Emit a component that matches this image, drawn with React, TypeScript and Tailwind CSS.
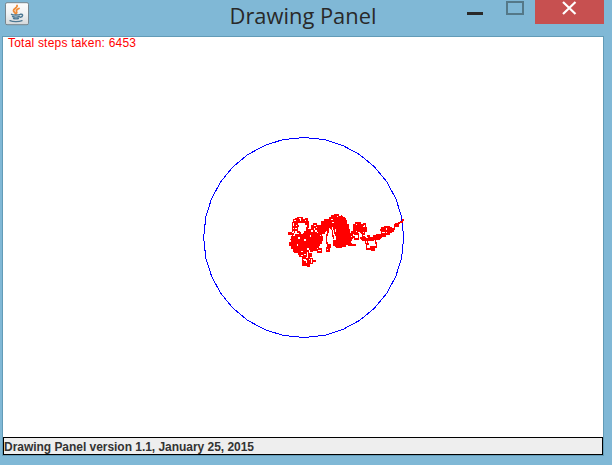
// One quadrant of the boundary, flattened into eight chords.
const QUARTER = [
  [0, 1], [0.207, 0.979], [0.389, 0.921], [0.559, 0.829],
  [0.707, 0.707], [0.829, 0.559], [0.921, 0.389], [0.979, 0.207],
];
const RING = [0, 1, 2, 3]
  .flatMap((q) =>
    QUARTER.map(([x, y]) => {
      const [px, py] = [[x, -y], [y, x], [-x, y], [-y, -x]][q];
      return `${(300.7 + 100 * px).toFixed(1)},${(200.5 + 100 * py).toFixed(1)}`;
    }),
  )
  .join(" ");

function JavaIcon() {
  return (
    <svg className="block h-6 w-6" viewBox="0 0 24 24">
      <defs>
        <linearGradient id="key" x1="0" y1="0" x2="0" y2="1">
          <stop offset="0" stopColor="#fdfdfd" />
          <stop offset="0.5" stopColor="#f0f2f3" />
          <stop offset="1" stopColor="#d3d7da" />
        </linearGradient>
      </defs>
      <rect x="0.5" y="0.7" width="23" height="22" rx="1.5" fill="url(#key)" stroke="#77858d" />
      <g fill="none" strokeLinecap="round">
        <path d="M12 3.500c1 2-3.500 3-3.500 5 0 1.500 1.700 2 2 3.300M14 6.500c-2 .8-3 1.500-2.500 2.800.4.900.7 1.200-.2 2.200" stroke="#ef8a35" strokeWidth="1.800" />
        <path d="M6.500 12.300c1.500 1 7.500.8 8.800 0M7.500 14.500c2 .8 5 .7 6.800 0M8.500 16.500c1.500.5 3.500.5 5 0M15.500 12.300c3-.7 2.700 2.500-.2 3M5 18.700c3 1.300 9 1.200 12 0" stroke="#4d7893" strokeWidth="1.400" />
      </g>
    </svg>
  );
}

function Walk() {
  return (
    <g fill="none" stroke="#ff0000" strokeWidth="4.4" strokeLinejoin="miter">
      {/* left cluster, three units to a pixel */}
      <g transform="translate(277.5 168) scale(.33333)">
        <path fill="#ff0000" strokeWidth="3" d="M38 94h6v-6h14v6h12v-9h8v-6h12v9h6v-6h12v9h9v6h6v18h-6v9h-9v9h-9v6h-9v-6h-9v9h-12v-6h-15v6h-12v-12h-9v-9h-6v-9h6v-9h-3z" />
        <path d="M36 66v-14h3v-9h6v-3h8v-3h12v6h12v-3h3v9h3v18h-3v6h3v9h6v9M40 51h9v-6h6v6h9v-6h6v6h6v9M45 54v12h9M51 69v12h9v9h12v-9h6v-9M36 66h6v-9h9v6h6M36 66v15M42 70v15M57 84v15M39 75h12M42 87h-9v-5h-9v5h12v9M33 96h12v9h-6v12h9M42 111v15h-3v9h9v-6h9v12M39 135v5h12v-5M84 75h6v9h9v-12h-6v-6h12v6h12M93 72v-9h6v-6h9v6h9v6M102 75v12h12v-6h9v6h3M96 93h15v-6h12v15M120 96h6v9h-9v9h9M105 126h9v6h9v9h-12v-6h-9v-6" />
        <path d="M60 135v15h-3v5h9v12h3v9M60 144h9v9h9v-9h-6v-9h12v12h9v6h-9v9h-6M87 150v9h-3v15M69 153v6h6v-3h-6M66 171h9v6h-9v5h12v-9M81 167h9v-6h6v6h9v3h-9v6h-9v9h-6v-15h9M84 180h6" />
        <path fill="#ff0000" strokeWidth="3" d="M66 172h10v9h-10zM82 167h9v8h-3v10h-6zM54 144h12v6h-12z" />
        <path stroke="#ffffff" d="M60 72h15M60 75h18M60 78h12M54 99h6M72 105h6M90 93h3M81 132h6M51 120h3" />
      </g>
      {/* upper arch and its dense eastern side */}
      <g transform="translate(277.5 168) scale(.33333)">
        <path fill="#ff0000" strokeWidth="3" d="M144 43h3v-6h6v-6h9v-3h13v6h9v6h9v6h6v12h6v15h3v15h-3v15h6v18h-9v-6h-6v9h-12v3h-18v-9h-3v-12h6v-12h-3v-12h3v-12h-6v-9h-9v-6h-9v-6h-3z" />
        <path fill="#ff0000" strokeWidth="3" d="M118 70h6v-6h3v-12h9v-6h9v6h9v12h-9v6h-9v9h-9v6h-9z" />
        <path d="M111 78h9v-9h-9v-6h12v-12h9v-6h12v6h9v9M117 84h15v-9h9v-9h12v9M144 66v15h-3v9h-3v24h3v15h-3v9h7v-15h-4M150 72v-9h9v9h3v15M144 120h6v9M156 75v18h3v9M162 108h-3v12h9v3h18v-6h15M195 102h9v-9h5v9M192 108h12v6h6" />
        <path stroke="#ffffff" strokeWidth="3" d="M153 45h4M156 54h4M171 36h3M189 102h3" />
      </g>
      {/* the walk east to the boundary */}
      <g transform="translate(337.500 168) scale(.33333)">
        <path fill="#ff0000" strokeWidth="3" d="M0 33h6v6h9v6h3v15h-1v12h3v12h-3v12h4v6h-7v9h-14z" />
        <path d="M0 119h12v-3h9v-6h9v6h3v6h12v-4h-9M18 105h15v-6h-6v-9h9v-9h9v6h9v15h-12v-6h-6v6M24 90h12v-6h6v6M39 81h-6v6h-9v12M45 75h-6v-15h6v-6h8v6h6v12h-9v3h15v-6h12v9h-12v-9M42 63h12v12h-9v-6h-6M54 54h6v6h9v-3h6v18h-9v6h-6v-9M60 78h-9v6h-6M63 75v9h3v12h6v6h9M72 78v9h-6" />
        <path fill="#ff0000" strokeWidth="3" d="M53 60h8v6h8v8h-6v3h-10v-6h-6v-6h6zM62 98h10v3h7v6h-13v-3h-4zM78 115h6v5h-6zM90 124h11v7h-11z" />
        <path d="M60 99h15v3h6v15h-3v15h12v-6h6v9h6v-9h6v-12h-3v-12M75 108v9M81 93h6v6h12v-6h8v6h12v-6h-9v-3h18v-5h15v-5h6v-8h-6v6h-9v-6h-9v-3h9v-3h12v3h6v6h6v6M84 105h15v-6h12v-3h12v-3h12v-6h12v-6h6v-9M87 99h15v3h15v-6M120 75h15v5h-12v6h12M126 84v9h-6M135 72v18M93 132v3h6" />
        <path fill="#ff0000" strokeWidth="3" d="M84 97h12v7h-12zM101 96h9v5h-9zM122 85h18v5h-18z" />
        <path d="M150 72h12v-9h3v-6h9v-5h6v-3h6v-4h6M162 60h12v3h-9M177 51v6M186 49v4" />
        <path fill="#ff0000" strokeWidth="3" d="M163 58h10v6h-10zM178 51h6v2h-6z" />
      </g>
    </g>
  );
}

export default function App() {
  return (
    <div className="flex h-[465px] w-[612px] flex-col overflow-hidden bg-[#80b8d6] font-['Liberation_Sans',Arial,sans-serif]">
      <header className="flex h-9 shrink-0 items-start justify-between">
        <div className="w-[150px] pt-[2px] pl-[5px]"><JavaIcon /></div>
        <h1 className="h-9 w-[306px] font-['Open_Sans','Noto_Sans',sans-serif]">
          <svg className="block h-9 w-[306px]">
            <text x="79.5" y="24" fontSize="22" textLength="147" lengthAdjust="spacingAndGlyphs" fill="#292929">Drawing Panel</text>
          </svg>
        </h1>
        <div className="flex w-[156px] items-start pr-2">
          <div className="mt-3 ml-[11px] h-[3px] w-4 shrink-0 bg-[#292929]" />
          <div className="mt-px ml-[23px] h-[14px] w-[18px] shrink-0 border-2 border-[#547888]" />
          <div className="ml-[11px] h-6 w-[69px] shrink-0 bg-[#c75050]">
            <svg className="block h-6 w-[69px]" viewBox="0 0 69 24">
              <path d="M28 2 40.500 14M40.500 2 28 14" stroke="#fff" strokeWidth="2.200" />
            </svg>
          </div>
        </div>
      </header>
      <main className="ml-[2px] h-[420px] w-[602px] shrink-0 border border-[#629bb7] bg-white">
        <svg className="block h-[400px] w-[600px]" viewBox="0 0 600 400" shapeRendering="crispEdges">
          <text x="5" y="10" fontSize="12" fill="#ff0000" textLength="128" lengthAdjust="spacing">Total steps taken: 6453</text>
          <polygon points={RING} fill="none" stroke="#0000ff" strokeWidth="1" />
          <Walk />
        </svg>
        <footer className="flex h-[18px] w-[600px] items-start border border-black bg-[#eeeeee]">
          <svg className="block h-4 w-[598px]">
            <text x="0" y="13" fontSize="12" fontWeight="700" fill="#333333" textLength="250" lengthAdjust="spacing">Drawing Panel version 1.1, January 25, 2015</text>
          </svg>
        </footer>
      </main>
    </div>
  );
}
